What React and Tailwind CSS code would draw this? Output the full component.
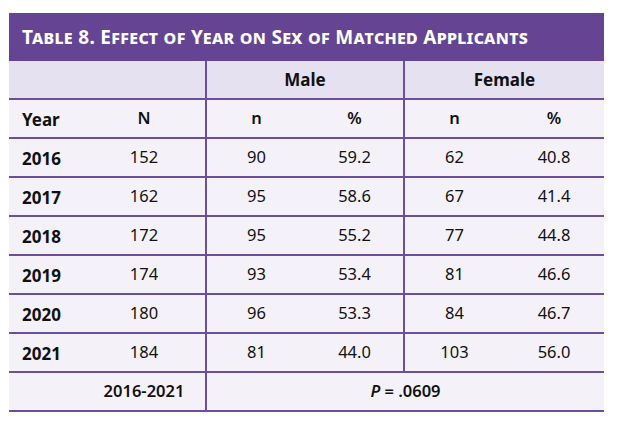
import React from "react";

const rows = [
  ["2016", "152", "90", "59.2", "62", "40.8"],
  ["2017", "162", "95", "58.6", "67", "41.4"],
  ["2018", "172", "95", "55.2", "77", "44.8"],
  ["2019", "174", "93", "53.4", "81", "46.6"],
  ["2020", "180", "96", "53.3", "84", "46.7"],
  ["2021", "184", "81", "44.0", "103", "56.0"],
];

const line = "border-[#6b4e9e]";

export default function App() {
  return (
    <div className="w-[624px] h-[432px] bg-white pt-[13px] pl-[9px]" style={{ fontFamily: '"Noto Sans", sans-serif' }}>
      <div className="w-[595px]">
        <div className="h-[48px] bg-[#654493] flex items-center pl-[13px] pt-[1px] text-white font-bold text-[19px] [font-variant:small-caps] tracking-[0.3px]">
          Table 8. Effect of Year on Sex of Matched Applicants
        </div>
        <div className="grid grid-cols-[74px_124px_99px_99px_99px_100px] text-[16.5px] text-[#111]">
          {/* Male / Female */}
          <div className={`col-span-2 h-[39px] bg-[#e5e1f0] border-b-2 border-r-2 ${line}`}></div>
          <div className={`col-span-2 h-[39px] bg-[#e5e1f0] border-b-2 border-r-2 ${line} flex items-center justify-center font-bold text-[17px]`}>Male</div>
          <div className={`col-span-2 h-[39px] bg-[#e5e1f0] border-b-2 ${line} flex items-center justify-center font-bold text-[17px]`}>Female</div>
          {/* Year / N / n / % */}
          <div className={`h-[39px] bg-[#f4f1f9] border-b-2 ${line} flex items-center pl-[13px] pt-[2px] font-bold text-[17px]`}>Year</div>
          <div className={`h-[39px] bg-[#f4f1f9] border-b-2 border-r-2 ${line} flex items-center justify-center font-semibold`}>N</div>
          <div className={`h-[39px] bg-[#f4f1f9] border-b-2 ${line} flex items-center justify-center font-semibold`}>n</div>
          <div className={`h-[39px] bg-[#f4f1f9] border-b-2 border-r-2 ${line} flex items-center justify-center font-semibold`}>%</div>
          <div className={`h-[39px] bg-[#f4f1f9] border-b-2 ${line} flex items-center justify-center font-semibold`}>n</div>
          <div className={`h-[39px] bg-[#f4f1f9] border-b-2 ${line} flex items-center justify-center font-semibold`}>%</div>
          {rows.map((r) => (
            <React.Fragment key={r[0]}>
              <div className={`h-[39px] bg-[#f4f1f9] border-b-2 ${line} flex items-center pl-[13px] pt-[3px] font-bold text-[17px]`}>{r[0]}</div>
              <div className={`h-[39px] bg-[#f4f1f9] border-b-2 border-r-2 ${line} flex items-center justify-center`}>{r[1]}</div>
              <div className={`h-[39px] bg-[#f4f1f9] border-b-2 ${line} flex items-center justify-center`}>{r[2]}</div>
              <div className={`h-[39px] bg-[#f4f1f9] border-b-2 border-r-2 ${line} flex items-center justify-center`}>{r[3]}</div>
              <div className={`h-[39px] bg-[#f4f1f9] border-b-2 ${line} flex items-center justify-center`}>{r[4]}</div>
              <div className={`h-[39px] bg-[#f4f1f9] border-b-2 ${line} flex items-center justify-center`}>{r[5]}</div>
            </React.Fragment>
          ))}
          {/* footer */}
          <div className={`h-[39px] bg-[#f4f1f9] border-b-2 ${line}`}></div>
          <div className={`h-[39px] bg-[#f4f1f9] border-b-2 border-r-2 ${line} flex items-center justify-center font-semibold`}>2016-2021</div>
          <div className={`col-span-4 h-[39px] bg-[#f4f1f9] border-b-2 ${line} flex items-center justify-center font-semibold`}>
            <span className="italic">P</span>&nbsp;= .0609
          </div>
        </div>
      </div>
    </div>
  );
}
